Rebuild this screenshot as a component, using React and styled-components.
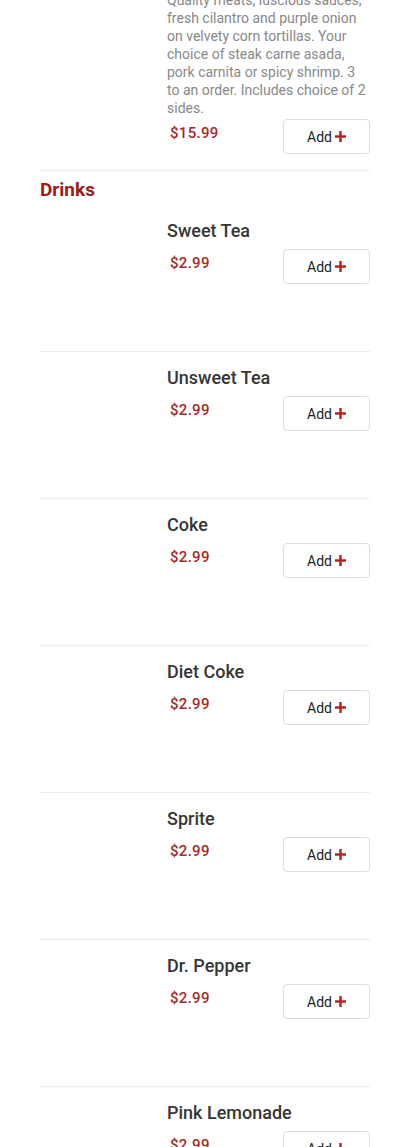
import styled, { createGlobalStyle } from 'styled-components'

const GlobalStyle = createGlobalStyle`
  body {
    margin: 0;
    background: #fff;
    font-family: Roboto, "Liberation Sans", Arial, sans-serif;
  }
`

// page is shown scrolled part way into the previous category
const Main = styled.main`
  padding: 0 40px;
  margin-top: -51px;
`

const Category = styled.h2`
  margin: 8px 0 4px;
  font-size: 19px;
  line-height: 22px;
  font-weight: 700;
  color: #9b1d16;
`

const Item = styled.div`
  display: grid;
  grid-template-columns: 115px 1fr;
  column-gap: 12px;
  padding: 16px 0;
  border-bottom: 1px solid #ebebeb;
`

const Thumb = styled.div`
  height: 114px;
  background: #fff;
`

const Info = styled.div`
  display: flex;
  flex-direction: column;
`

const Name = styled.div`
  font-size: 18px;
  line-height: 19px;
  font-weight: 500;
  color: #363636;
  margin-bottom: 7px;
`

const Desc = styled.div`
  font-size: 14px;
  line-height: 18px;
  color: #888;
`

const Row = styled.div`
  display: flex;
  justify-content: space-between;
  align-items: flex-start;
  margin-top: 2px;
`

const Price = styled.div`
  padding-left: 3px;
  margin-top: 5px;
  font-size: 15px;
  line-height: 18px;
  font-weight: 500;
  letter-spacing: 0.3px;
  color: #a52a25;
`

const AddButton = styled.button`
  width: 87px;
  height: 35px;
  display: flex;
  align-items: center;
  justify-content: center;
  gap: 3px;
  border: 1px solid #dcdcdc;
  border-radius: 4px;
  background: #fff;
  font-family: inherit;
  font-size: 14px;
  color: #222;
  padding: 0;
`

const Plus = () => (
  <svg width="11" height="11" viewBox="0 0 11 11">
    <rect x="4.3" y="0" width="2.4" height="11" fill="#b3201c" />
    <rect x="0" y="4.3" width="11" height="2.4" fill="#b3201c" />
  </svg>
)

const MenuItem = ({ name, desc, price }) => (
  <Item>
    <Thumb />
    <Info>
      <Name>{name}</Name>
      {desc && <Desc>{desc}</Desc>}
      <Row>
        <Price>{price}</Price>
        <AddButton>Add<Plus /></AddButton>
      </Row>
    </Info>
  </Item>
)

const drinks = ['Sweet Tea', 'Unsweet Tea', 'Coke', 'Diet Coke', 'Sprite', 'Dr. Pepper', 'Pink Lemonade']

const App = () => (
  <>
    <GlobalStyle />
    <Main>
      <MenuItem
        name="Street Tacos"
        desc="Quality meats, luscious sauces, fresh cilantro and purple onion on velvety corn tortillas. Your choice of steak carne asada, pork carnita or spicy shrimp. 3 to an order. Includes choice of 2 sides."
        price="$15.99"
      />
      <Category>Drinks</Category>
      {drinks.map(d => (
        <MenuItem key={d} name={d} price="$2.99" />
      ))}
    </Main>
  </>
)

export default App
